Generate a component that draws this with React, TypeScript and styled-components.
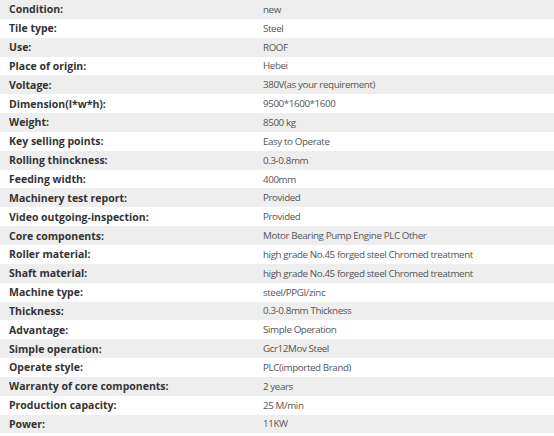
import React from "react";
import styled, { createGlobalStyle } from "styled-components";

const Global = createGlobalStyle`
  html, body { margin: 0; padding: 0; background: #ffffff; }
  body { font-family: "Open Sans", "Noto Sans", sans-serif; }
`;

const Table = styled.div`
  display: flex;
  flex-direction: column;
  width: 554px;
`;

const Row = styled.div<{ $shade: boolean }>`
  display: grid;
  grid-template-columns: 263px 1fr;
  align-items: center;
  height: 18.85px;
  background: ${(p) => (p.$shade ? "#eeeeee" : "#ffffff")};
`;

const Label = styled.div`
  padding-left: 9px;
  font-size: 10.5px;
  font-weight: 700;
  color: #333333;
  white-space: nowrap;
`;

const Value = styled.div`
  font-size: 9.8px;
  letter-spacing: -0.4px;
  font-weight: 400;
  color: #555555;
  white-space: nowrap;
`;

const rows: [string, string][] = [
  ["Condition:", "new"],
  ["Tile type:", "Steel"],
  ["Use:", "ROOF"],
  ["Place of origin:", "Hebei"],
  ["Voltage:", "380V(as your requirement)"],
  ["Dimension(l*w*h):", "9500*1600*1600"],
  ["Weight:", "8500 kg"],
  ["Key selling points:", "Easy to Operate"],
  ["Rolling thinckness:", "0.3-0.8mm"],
  ["Feeding width:", "400mm"],
  ["Machinery test report:", "Provided"],
  ["Video outgoing-inspection:", "Provided"],
  ["Core components:", "Motor Bearing Pump Engine PLC Other"],
  ["Roller material:", "high grade No.45 forged steel Chromed treatment"],
  ["Shaft material:", "high grade No.45 forged steel Chromed treatment"],
  ["Machine type:", "steel/PPGI/zinc"],
  ["Thickness:", "0.3-0.8mm Thickness"],
  ["Advantage:", "Simple Operation"],
  ["Simple operation:", "Gcr12Mov Steel"],
  ["Operate style:", "PLC(imported Brand)"],
  ["Warranty of core components:", "2 years"],
  ["Production capacity:", "25 M/min"],
  ["Power:", "11KW"],
];

export default function App() {
  return (
    <>
      <Global />
      <Table>
        {rows.map(([k, v], i) => (
          <Row key={k} $shade={i % 2 === 0}>
            <Label>{k}</Label>
            <Value>{v}</Value>
          </Row>
        ))}
      </Table>
    </>
  );
}
